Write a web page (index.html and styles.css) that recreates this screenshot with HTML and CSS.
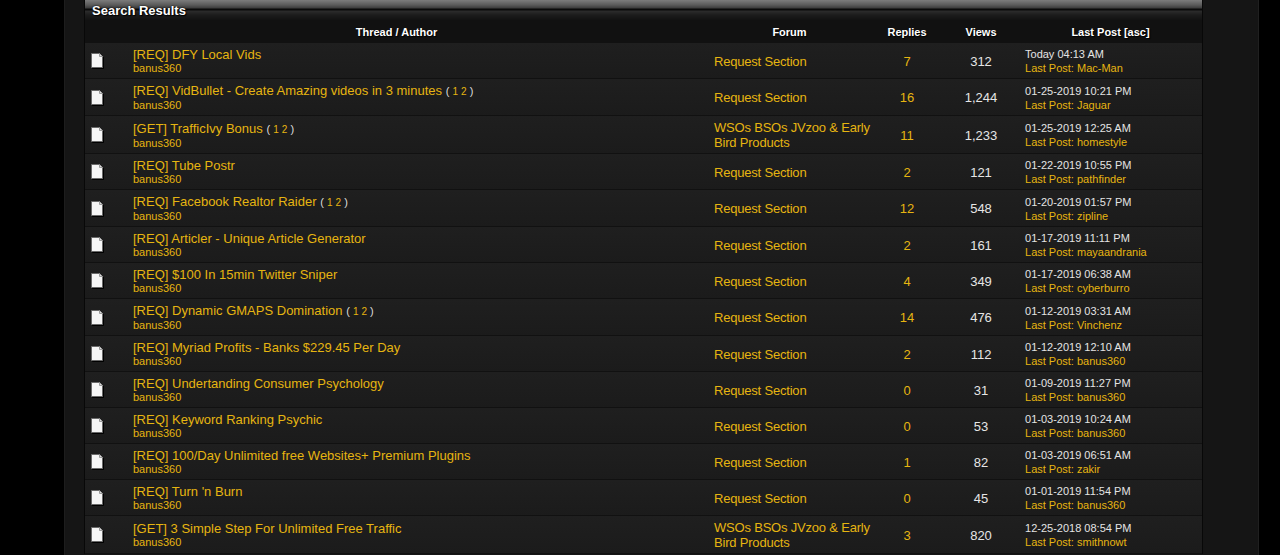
FILE: index.html
```html
<!DOCTYPE html>
<html>
<head>
<meta charset="utf-8">
<title>Search Results</title>
<link rel="stylesheet" href="styles.css">
</head>
<body>
<div class="wrap">
  <div class="inner">
    <div class="tcat">Search Results</div>
    <table class="results">
      <colgroup>
        <col class="c-icon"><col class="c-thread"><col class="c-forum"><col class="c-replies"><col class="c-views"><col class="c-last">
      </colgroup>
      <thead>
        <tr>
          <th colspan="2">Thread / Author</th>
          <th>Forum</th>
          <th>Replies</th>
          <th>Views</th>
          <th>Last Post [asc]</th>
        </tr>
      </thead>
      <tbody>
        <tr>
          <td class="icon"><svg class="page" viewBox="0 0 14 17" width="14" height="17"><path d="M1.5 1.5H9.5L12.5 4.5V15.5H1.5Z" fill="#f6f6f6" stroke="#6a6a6a"/><path d="M9.5 1.5V4.5H12.5" fill="#dcdcdc" stroke="#9a9a9a"/></svg></td>
          <td class="thread"><a class="title">[REQ] DFY Local Vids</a><div class="author">banus360</div></td>
          <td class="forum">Request Section</td><td class="num rep">7</td><td class="num views">312</td>
          <td class="last"><div class="date">Today 04:13 AM</div><div class="lp">Last Post: Mac-Man</div></td>
        </tr>
        <tr>
          <td class="icon"><svg class="page" viewBox="0 0 14 17" width="14" height="17"><path d="M1.5 1.5H9.5L12.5 4.5V15.5H1.5Z" fill="#f6f6f6" stroke="#6a6a6a"/><path d="M9.5 1.5V4.5H12.5" fill="#dcdcdc" stroke="#9a9a9a"/></svg></td>
          <td class="thread"><a class="title">[REQ] VidBullet - Create Amazing videos in 3 minutes</a> <span class="pages">( <a>1</a> <a>2</a> )</span><div class="author">banus360</div></td>
          <td class="forum">Request Section</td><td class="num rep">16</td><td class="num views">1,244</td>
          <td class="last"><div class="date">01-25-2019 10:21 PM</div><div class="lp">Last Post: Jaguar</div></td>
        </tr>
        <tr>
          <td class="icon"><svg class="page" viewBox="0 0 14 17" width="14" height="17"><path d="M1.5 1.5H9.5L12.5 4.5V15.5H1.5Z" fill="#f6f6f6" stroke="#6a6a6a"/><path d="M9.5 1.5V4.5H12.5" fill="#dcdcdc" stroke="#9a9a9a"/></svg></td>
          <td class="thread"><a class="title">[GET] TrafficIvy Bonus</a> <span class="pages">( <a>1</a> <a>2</a> )</span><div class="author">banus360</div></td>
          <td class="forum">WSOs BSOs JVzoo &amp; Early Bird Products</td><td class="num rep">11</td><td class="num views">1,233</td>
          <td class="last"><div class="date">01-25-2019 12:25 AM</div><div class="lp">Last Post: homestyle</div></td>
        </tr>
        <tr>
          <td class="icon"><svg class="page" viewBox="0 0 14 17" width="14" height="17"><path d="M1.5 1.5H9.5L12.5 4.5V15.5H1.5Z" fill="#f6f6f6" stroke="#6a6a6a"/><path d="M9.5 1.5V4.5H12.5" fill="#dcdcdc" stroke="#9a9a9a"/></svg></td>
          <td class="thread"><a class="title">[REQ] Tube Postr</a><div class="author">banus360</div></td>
          <td class="forum">Request Section</td><td class="num rep">2</td><td class="num views">121</td>
          <td class="last"><div class="date">01-22-2019 10:55 PM</div><div class="lp">Last Post: pathfinder</div></td>
        </tr>
        <tr>
          <td class="icon"><svg class="page" viewBox="0 0 14 17" width="14" height="17"><path d="M1.5 1.5H9.5L12.5 4.5V15.5H1.5Z" fill="#f6f6f6" stroke="#6a6a6a"/><path d="M9.5 1.5V4.5H12.5" fill="#dcdcdc" stroke="#9a9a9a"/></svg></td>
          <td class="thread"><a class="title">[REQ] Facebook Realtor Raider</a> <span class="pages">( <a>1</a> <a>2</a> )</span><div class="author">banus360</div></td>
          <td class="forum">Request Section</td><td class="num rep">12</td><td class="num views">548</td>
          <td class="last"><div class="date">01-20-2019 01:57 PM</div><div class="lp">Last Post: zipline</div></td>
        </tr>
        <tr>
          <td class="icon"><svg class="page" viewBox="0 0 14 17" width="14" height="17"><path d="M1.5 1.5H9.5L12.5 4.5V15.5H1.5Z" fill="#f6f6f6" stroke="#6a6a6a"/><path d="M9.5 1.5V4.5H12.5" fill="#dcdcdc" stroke="#9a9a9a"/></svg></td>
          <td class="thread"><a class="title">[REQ] Articler - Unique Article Generator</a><div class="author">banus360</div></td>
          <td class="forum">Request Section</td><td class="num rep">2</td><td class="num views">161</td>
          <td class="last"><div class="date">01-17-2019 11:11 PM</div><div class="lp">Last Post: mayaandrania</div></td>
        </tr>
        <tr>
          <td class="icon"><svg class="page" viewBox="0 0 14 17" width="14" height="17"><path d="M1.5 1.5H9.5L12.5 4.5V15.5H1.5Z" fill="#f6f6f6" stroke="#6a6a6a"/><path d="M9.5 1.5V4.5H12.5" fill="#dcdcdc" stroke="#9a9a9a"/></svg></td>
          <td class="thread"><a class="title">[REQ] $100 In 15min Twitter Sniper</a><div class="author">banus360</div></td>
          <td class="forum">Request Section</td><td class="num rep">4</td><td class="num views">349</td>
          <td class="last"><div class="date">01-17-2019 06:38 AM</div><div class="lp">Last Post: cyberburro</div></td>
        </tr>
        <tr>
          <td class="icon"><svg class="page" viewBox="0 0 14 17" width="14" height="17"><path d="M1.5 1.5H9.5L12.5 4.5V15.5H1.5Z" fill="#f6f6f6" stroke="#6a6a6a"/><path d="M9.5 1.5V4.5H12.5" fill="#dcdcdc" stroke="#9a9a9a"/></svg></td>
          <td class="thread"><a class="title">[REQ] Dynamic GMAPS Domination</a> <span class="pages">( <a>1</a> <a>2</a> )</span><div class="author">banus360</div></td>
          <td class="forum">Request Section</td><td class="num rep">14</td><td class="num views">476</td>
          <td class="last"><div class="date">01-12-2019 03:31 AM</div><div class="lp">Last Post: Vinchenz</div></td>
        </tr>
        <tr>
          <td class="icon"><svg class="page" viewBox="0 0 14 17" width="14" height="17"><path d="M1.5 1.5H9.5L12.5 4.5V15.5H1.5Z" fill="#f6f6f6" stroke="#6a6a6a"/><path d="M9.5 1.5V4.5H12.5" fill="#dcdcdc" stroke="#9a9a9a"/></svg></td>
          <td class="thread"><a class="title">[REQ] Myriad Profits - Banks $229.45 Per Day</a><div class="author">banus360</div></td>
          <td class="forum">Request Section</td><td class="num rep">2</td><td class="num views">112</td>
          <td class="last"><div class="date">01-12-2019 12:10 AM</div><div class="lp">Last Post: banus360</div></td>
        </tr>
        <tr>
          <td class="icon"><svg class="page" viewBox="0 0 14 17" width="14" height="17"><path d="M1.5 1.5H9.5L12.5 4.5V15.5H1.5Z" fill="#f6f6f6" stroke="#6a6a6a"/><path d="M9.5 1.5V4.5H12.5" fill="#dcdcdc" stroke="#9a9a9a"/></svg></td>
          <td class="thread"><a class="title">[REQ] Undertanding Consumer Psychology</a><div class="author">banus360</div></td>
          <td class="forum">Request Section</td><td class="num rep">0</td><td class="num views">31</td>
          <td class="last"><div class="date">01-09-2019 11:27 PM</div><div class="lp">Last Post: banus360</div></td>
        </tr>
        <tr>
          <td class="icon"><svg class="page" viewBox="0 0 14 17" width="14" height="17"><path d="M1.5 1.5H9.5L12.5 4.5V15.5H1.5Z" fill="#f6f6f6" stroke="#6a6a6a"/><path d="M9.5 1.5V4.5H12.5" fill="#dcdcdc" stroke="#9a9a9a"/></svg></td>
          <td class="thread"><a class="title">[REQ] Keyword Ranking Psychic</a><div class="author">banus360</div></td>
          <td class="forum">Request Section</td><td class="num rep">0</td><td class="num views">53</td>
          <td class="last"><div class="date">01-03-2019 10:24 AM</div><div class="lp">Last Post: banus360</div></td>
        </tr>
        <tr>
          <td class="icon"><svg class="page" viewBox="0 0 14 17" width="14" height="17"><path d="M1.5 1.5H9.5L12.5 4.5V15.5H1.5Z" fill="#f6f6f6" stroke="#6a6a6a"/><path d="M9.5 1.5V4.5H12.5" fill="#dcdcdc" stroke="#9a9a9a"/></svg></td>
          <td class="thread"><a class="title">[REQ] 100/Day Unlimited free Websites+ Premium Plugins</a><div class="author">banus360</div></td>
          <td class="forum">Request Section</td><td class="num rep">1</td><td class="num views">82</td>
          <td class="last"><div class="date">01-03-2019 06:51 AM</div><div class="lp">Last Post: zakir</div></td>
        </tr>
        <tr>
          <td class="icon"><svg class="page" viewBox="0 0 14 17" width="14" height="17"><path d="M1.5 1.5H9.5L12.5 4.5V15.5H1.5Z" fill="#f6f6f6" stroke="#6a6a6a"/><path d="M9.5 1.5V4.5H12.5" fill="#dcdcdc" stroke="#9a9a9a"/></svg></td>
          <td class="thread"><a class="title">[REQ] Turn 'n Burn</a><div class="author">banus360</div></td>
          <td class="forum">Request Section</td><td class="num rep">0</td><td class="num views">45</td>
          <td class="last"><div class="date">01-01-2019 11:54 PM</div><div class="lp">Last Post: banus360</div></td>
        </tr>
        <tr>
          <td class="icon"><svg class="page" viewBox="0 0 14 17" width="14" height="17"><path d="M1.5 1.5H9.5L12.5 4.5V15.5H1.5Z" fill="#f6f6f6" stroke="#6a6a6a"/><path d="M9.5 1.5V4.5H12.5" fill="#dcdcdc" stroke="#9a9a9a"/></svg></td>
          <td class="thread"><a class="title">[GET] 3 Simple Step For Unlimited Free Traffic</a><div class="author">banus360</div></td>
          <td class="forum">WSOs BSOs JVzoo &amp; Early Bird Products</td><td class="num rep">3</td><td class="num views">820</td>
          <td class="last"><div class="date">12-25-2018 08:54 PM</div><div class="lp">Last Post: smithnowt</div></td>
        </tr>
      </tbody>
    </table>
  </div>
</div>
</body>
</html>
```

FILE: styles.css
```css
html, body {
  margin: 0;
  padding: 0;
  background: #000;
  height: 555px;
  overflow: hidden;
}
body {
  font-family: "Liberation Sans", Arial, sans-serif;
  color: #dddddd;
}
.wrap {
  margin-left: 64px;
  width: 1156px;
  min-height: 555px;
  background: #151515;
  border-left: 1px solid #1d1d1d;
  border-right: 1px solid #202020;
  padding: 0 18px 0 19px;
  box-sizing: content-box;
}
.inner {
  border-left: 1px solid #080808;
  border-right: 1px solid #080808;
  width: 1117px;
}
.tcat {
  height: 20px;
  line-height: 21px;
  padding-left: 7px;
  font-size: 13px;
  font-weight: bold;
  color: #ffffff;
  text-shadow: 1px 1px 1px #000, 0 0 2px #000;
  background: linear-gradient(to bottom, #7c7c7c 0px, #5a5a5a 5px, #3c3c3c 8px, #0a0a0a 9px, #0a0a0a 10px, #2c2c2c 11px, #1c1c1c 15px, #121212 20px);
}
.results {
  width: 1117px;
  border-collapse: collapse;
  table-layout: fixed;
}
.c-icon { width: 42px; }
.c-thread { width: 581px; }
.c-forum { width: 163px; }
.c-replies { width: 72px; }
.c-views { width: 76px; }
.c-last { width: 183px; }
.results th {
  height: 23px;
  padding: 0;
  font-size: 11px;
  line-height: 14px;
  font-weight: bold;
  color: #ffffff;
  text-align: center;
  text-shadow: 1px 1px 1px #000;
  background: #111111;
}
.results tbody tr {
  background: linear-gradient(to bottom, #1f1f1f, #1b1b1b);
}
.results td {
  padding: 4px 6px 3px;
  border-bottom: 1px solid #111111;
  vertical-align: middle;
  font-size: 13px;
  line-height: 15px;
}
.results td.icon {
  padding: 0 6px 0 5px;
}
.page {
  display: block;
  filter: drop-shadow(1px 1px 0 #000);
}
.title, .author, .forum, .rep, .lp, .pages a {
  color: #e6b511;
}
.title {
  font-size: 13px;
  line-height: 15px;
  text-decoration: none;
}
.pages {
  font-size: 11px;
  color: #dddddd;
}
.pages a {
  font-size: 10px;
}
.author {
  font-size: 11px;
  line-height: 13px;
}
.results td.forum {
  padding-right: 0;
  letter-spacing: -0.2px;
}
.num {
  text-align: center;
}
.views {
  color: #e6e6e6;
}
.results td.last {
  font-size: 11px;
  line-height: 14px;
}
.date {
  color: #e4e4e4;
}
```
